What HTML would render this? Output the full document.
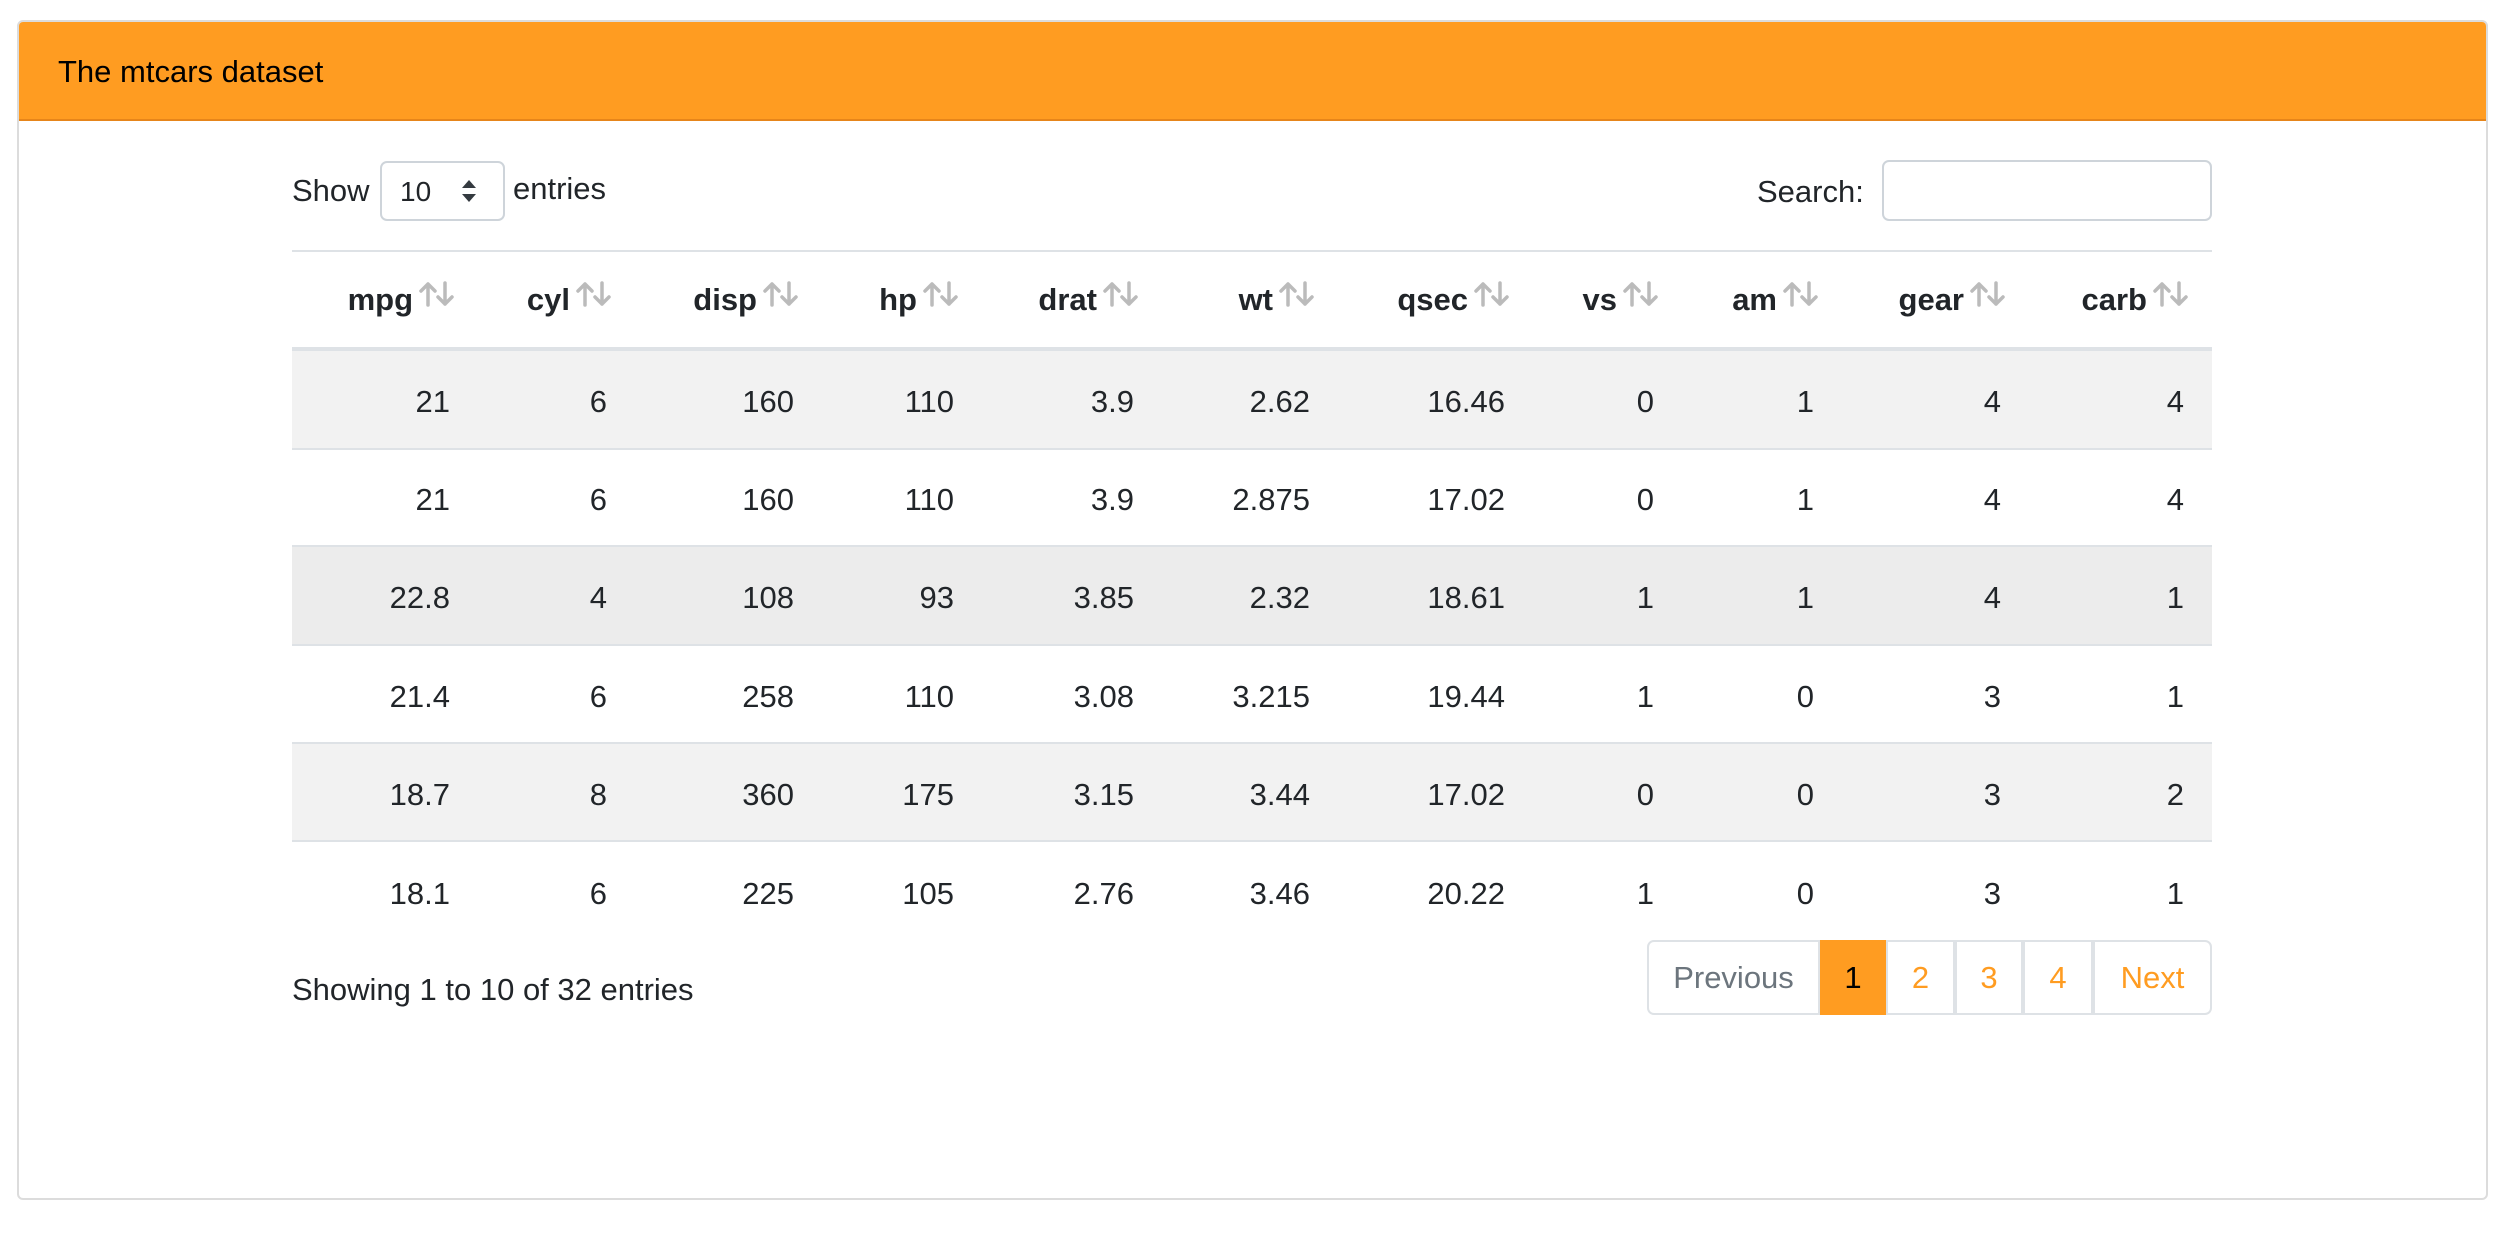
<!DOCTYPE html>
<html><head><meta charset="utf-8"><style>
*{box-sizing:border-box;margin:0;padding:0}
body{width:2506px;height:1236px;background:#fff;font-family:"Liberation Sans",Arial,sans-serif;color:#212529;position:relative;overflow:hidden}
.card{position:absolute;left:17px;top:20px;width:2471px;height:1180px;border:2px solid #dcdcdc;border-radius:6px;overflow:hidden}
.hdr{position:absolute;left:0;top:0;right:0;height:99px;background:#ff9c21;border-bottom:2px solid #e6851a;font-size:31px;color:#000;padding:34px 0 0 39px;line-height:1}
.t{position:absolute;font-size:31px;line-height:1;white-space:nowrap}
.r{text-align:right}
.box{position:absolute;border:2px solid #ced4da;border-radius:7px;background:#fff}
.row{position:absolute;left:292px;width:1920px;height:98px}
.line{position:absolute;left:292px;width:1920px;height:2px;background:#dee2e6}
.h{font-weight:bold}
.pg{position:absolute;top:940px;height:75px;border:2px solid #dee2e6;font-size:31px;line-height:71px;text-align:center;color:#ff9c21;margin-left:-2px}
</style></head><body>
<div class="card"><div class="hdr">The mtcars dataset</div></div>

<div class="t" style="left:292px;top:175px">Show</div>
<div class="box" style="left:380px;top:161px;width:125px;height:60px"></div>
<div class="t" style="left:400px;top:178px;font-size:28px">10</div>
<svg style="position:absolute;left:460px;top:178px" width="18" height="26"><path d="M9 2 L16 10 L2 10Z M9 24 L16 16 L2 16Z" fill="#343a40"/></svg>
<div class="t" style="left:513px;top:173px">entries</div>
<div class="t" style="left:1757px;top:176px">Search:</div>
<div class="box" style="left:1882px;top:160px;width:330px;height:61px"></div>

<div class="line" style="top:250px"></div>
<div class="row" style="top:351px;background:#f2f2f2"></div>
<div class="row" style="top:546px;background:#ececec"></div>
<div class="row" style="top:743px;background:#f2f2f2"></div>
<div class="line" style="top:347px;height:4px"></div>
<div class="line" style="top:448px"></div>
<div class="line" style="top:545px"></div>
<div class="line" style="top:644px"></div>
<div class="line" style="top:742px"></div>
<div class="line" style="top:840px"></div>

<div id="tbl"></div>
<script>
var R=[450,607,794,954,1134,1310,1505,1654,1814,2001,2184];
var H=["mpg","cyl","disp","hp","drat","wt","qsec","vs","am","gear","carb"];
var D=[[21,6,160,110,3.9,2.62,16.46,0,1,4,4],[21,6,160,110,3.9,2.875,17.02,0,1,4,4],[22.8,4,108,93,3.85,2.32,18.61,1,1,4,1],[21.4,6,258,110,3.08,3.215,19.44,1,0,3,1],[18.7,8,360,175,3.15,3.44,17.02,0,0,3,2],[18.1,6,225,105,2.76,3.46,20.22,1,0,3,1]];
var C=[400,498,596,695,793,892];var s="";
for(var i=0;i<11;i++){
s+='<div class="t r h" style="right:'+(2506-R[i]+37)+'px;top:284px">'+H[i]+'</div>';
s+='<svg style="position:absolute;left:'+(R[i]-32)+'px;top:281px" width="38" height="26"><g fill="none" stroke="#bbb" stroke-width="3.5" stroke-linecap="round" stroke-linejoin="round"><path d="M10 24 V3 M3 10 L10 3 L17 10"/><path d="M27 2 V23 M20 16 L27 23 L34 16"/></g></svg>';
for(var j=0;j<6;j++)s+='<div class="t r" style="right:'+(2506-R[i])+'px;top:'+(C[j]-14)+'px">'+D[j][i]+'</div>';}
document.getElementById('tbl').innerHTML=s;
</script>

<div class="t" style="left:292px;top:974px">Showing 1 to 10 of 32 entries</div>
<div class="pg" style="left:1649px;width:173px;color:#6c757d;border-radius:7px 0 0 7px">Previous</div>
<div class="pg" style="left:1822px;width:66px;background:#ff9c21;border-color:#ff9c21;color:#000">1</div>
<div class="pg" style="left:1888px;width:69px">2</div>
<div class="pg" style="left:1957px;width:68px">3</div>
<div class="pg" style="left:2025px;width:70px">4</div>
<div class="pg" style="left:2095px;width:119px;border-radius:0 7px 7px 0">Next</div>
</body></html>
